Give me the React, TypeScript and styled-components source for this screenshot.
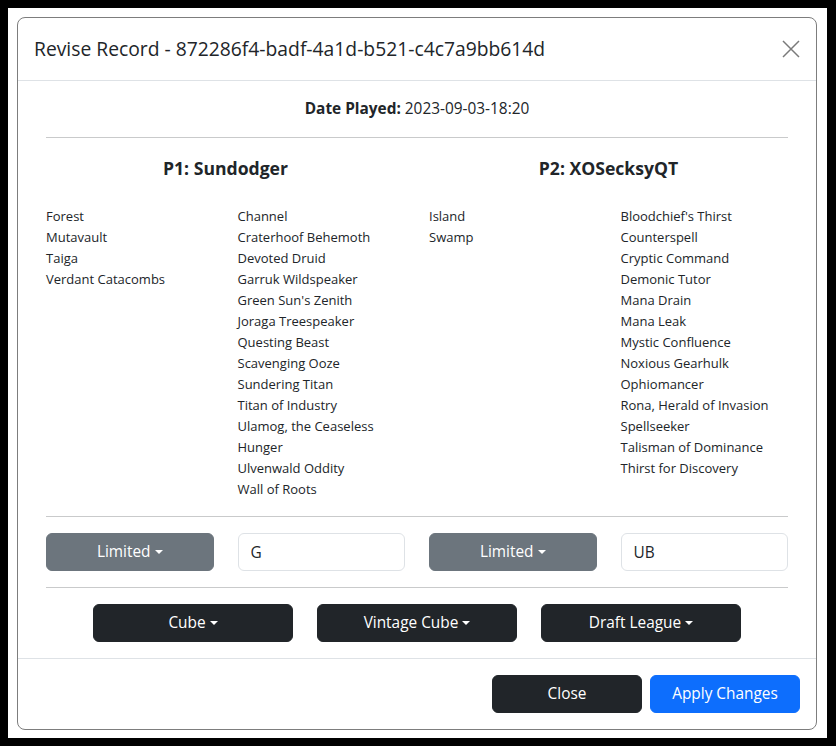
import React from "react";
import styled, { createGlobalStyle } from "styled-components";

const GlobalStyle = createGlobalStyle`
  html, body {
    margin: 0;
    padding: 0;
    background: #000;
  }
  body {
    font-family: "Open Sans", "Noto Sans", "Liberation Sans", sans-serif;
    color: #212529;
    -webkit-font-smoothing: antialiased;
  }
  * { box-sizing: border-box; }
`;

const Frame = styled.div`
  width: 836px;
  height: 746px;
  padding: 8px 9px 8px 8px;
  background: #000;
`;

const Backdrop = styled.div`
  height: 100%;
  background: #fff;
  padding: 9px 10px 10px 9px;
`;

const Modal = styled.div`
  width: 800px;
  background: #fff;
  border: 1px solid #7d7d7d;
  border-radius: 8px;
  display: flex;
  flex-direction: column;
`;

const Header = styled.div`
  display: flex;
  align-items: center;
  justify-content: space-between;
  padding: 16px;
  border-bottom: 1px solid #dee2e6;
`;

const Title = styled.h5`
  margin: 0;
  font-size: 19.3px;
  line-height: 30px;
  font-weight: 400;
  color: #212529;
`;

const CloseX = styled.button`
  border: 0;
  background: transparent;
  padding: 0;
  width: 18px;
  height: 18px;
  display: flex;
  align-items: center;
  justify-content: center;
  cursor: pointer;
`;

const Body = styled.div`
  padding: 16px;
`;

const Container = styled.div`
  padding: 0 12px;
`;

const DateLine = styled.div`
  text-align: center;
  font-size: 15.4px;
  line-height: 24px;
  b { font-weight: 700; }
`;

const Divider = styled.hr`
  margin: 16px 0;
  border: 0;
  border-top: 1px solid #c9cacb;
  height: 0;
`;

const PlayerGrid = styled.div`
  display: grid;
  grid-template-columns: 1fr 1fr;
  margin: 0 -12px;
`;

const PlayerColumn = styled.div`
  display: flex;
  flex-direction: column;
`;

const PlayerName = styled.h5`
  margin: 2px 12px 26px;
  text-align: center;
  font-size: 17.6px;
  line-height: 24px;
  font-weight: 700;
  color: #212529;
`;

const CardColumns = styled.div`
  display: grid;
  grid-template-columns: 1fr 1fr;
`;

const CardList = styled.ul`
  list-style: none;
  margin: 0;
  padding: 0 12px;
`;

const CardItem = styled.li`
  font-size: 13px;
  line-height: 21px;
  color: #212529;
  white-space: nowrap;
`;

const ControlGrid = styled.div`
  display: grid;
  grid-template-columns: repeat(4, 1fr);
  margin: 0 -12px;
`;

const Cell = styled.div`
  padding: 0 12px;
`;

const Button = styled.button<{ $variant: "secondary" | "dark" | "primary"; $width?: string }>`
  display: inline-flex;
  align-items: center;
  justify-content: center;
  width: ${(p) => p.$width ?? "100%"};
  height: 38px;
  padding: 6px 12px;
  font-family: inherit;
  font-size: 15.4px;
  line-height: 24px;
  font-weight: 400;
  color: #fff;
  border-radius: 6px;
  cursor: pointer;
  background: ${(p) =>
    p.$variant === "secondary" ? "#6c757d" : p.$variant === "dark" ? "#212529" : "#0d6efd"};
  border: 1px solid
    ${(p) =>
      p.$variant === "secondary" ? "#6c757d" : p.$variant === "dark" ? "#212529" : "#0d6efd"};
`;

const Caret = styled.span`
  display: inline-block;
  margin-left: 4px;
  width: 0;
  height: 0;
  border-top: 4.5px solid #fff;
  border-left: 4.5px solid transparent;
  border-right: 4.5px solid transparent;
  vertical-align: middle;
`;

const TextInput = styled.input`
  display: block;
  width: 100%;
  height: 38px;
  padding: 6px 12px;
  font-family: inherit;
  font-size: 15.4px;
  line-height: 24px;
  color: #212529;
  background: #fff;
  border: 1px solid #dee2e6;
  border-radius: 6px;
  outline: none;
`;

const CubeRow = styled.div`
  display: flex;
  justify-content: center;
  gap: 24px;
`;

const Footer = styled.div`
  display: flex;
  justify-content: flex-end;
  align-items: center;
  gap: 8px;
  padding: 16px;
  border-top: 1px solid #dee2e6;
`;

const p1Lands = ["Forest", "Mutavault", "Taiga", "Verdant Catacombs"];
const p1Spells = [
  "Channel",
  "Craterhoof Behemoth",
  "Devoted Druid",
  "Garruk Wildspeaker",
  "Green Sun's Zenith",
  "Joraga Treespeaker",
  "Questing Beast",
  "Scavenging Ooze",
  "Sundering Titan",
  "Titan of Industry",
  "Ulamog, the Ceaseless",
  "Hunger",
  "Ulvenwald Oddity",
  "Wall of Roots",
];
const p2Lands = ["Island", "Swamp"];
const p2Spells = [
  "Bloodchief's Thirst",
  "Counterspell",
  "Cryptic Command",
  "Demonic Tutor",
  "Mana Drain",
  "Mana Leak",
  "Mystic Confluence",
  "Noxious Gearhulk",
  "Ophiomancer",
  "Rona, Herald of Invasion",
  "Spellseeker",
  "Talisman of Dominance",
  "Thirst for Discovery",
];

const players = [
  { name: "P1: Sundodger", lands: p1Lands, spells: p1Spells, colors: "G" },
  { name: "P2: XOSecksyQT", lands: p2Lands, spells: p2Spells, colors: "UB" },
];

export default function App() {
  return (
    <>
      <GlobalStyle />
      <Frame>
        <Backdrop>
          <Modal>
            <Header>
              <Title>Revise Record - 872286f4-badf-4a1d-b521-c4c7a9bb614d</Title>
              <CloseX aria-label="Close">
                <svg width="18" height="18" viewBox="0 0 18 18">
                  <path d="M1 1 L17 17 M17 1 L1 17" stroke="#7a7a7a" strokeWidth="1.5" fill="none" />
                </svg>
              </CloseX>
            </Header>
            <Body>
              <Container>
                <DateLine>
                  <b>Date Played:</b> 2023-09-03-18:20
                </DateLine>
                <Divider />
                <PlayerGrid>
                  {players.map((p) => (
                    <PlayerColumn key={p.name}>
                      <PlayerName>{p.name}</PlayerName>
                      <CardColumns>
                        <CardList>
                          {p.lands.map((c) => (
                            <CardItem key={c}>{c}</CardItem>
                          ))}
                        </CardList>
                        <CardList>
                          {p.spells.map((c) => (
                            <CardItem key={c}>{c}</CardItem>
                          ))}
                        </CardList>
                      </CardColumns>
                    </PlayerColumn>
                  ))}
                </PlayerGrid>
                <Divider />
                <ControlGrid>
                  {players.map((p) => (
                    <React.Fragment key={p.name}>
                      <Cell>
                        <Button $variant="secondary">
                          Limited
                          <Caret />
                        </Button>
                      </Cell>
                      <Cell>
                        <TextInput defaultValue={p.colors} />
                      </Cell>
                    </React.Fragment>
                  ))}
                </ControlGrid>
                <Divider />
                <CubeRow>
                  {["Cube", "Vintage Cube", "Draft League"].map((l) => (
                    <Button key={l} $variant="dark" $width="200px">
                      {l}
                      <Caret />
                    </Button>
                  ))}
                </CubeRow>
              </Container>
            </Body>
            <Footer>
              <Button $variant="dark" $width="150px">
                Close
              </Button>
              <Button $variant="primary" $width="150px">
                Apply Changes
              </Button>
            </Footer>
          </Modal>
        </Backdrop>
      </Frame>
    </>
  );
}
